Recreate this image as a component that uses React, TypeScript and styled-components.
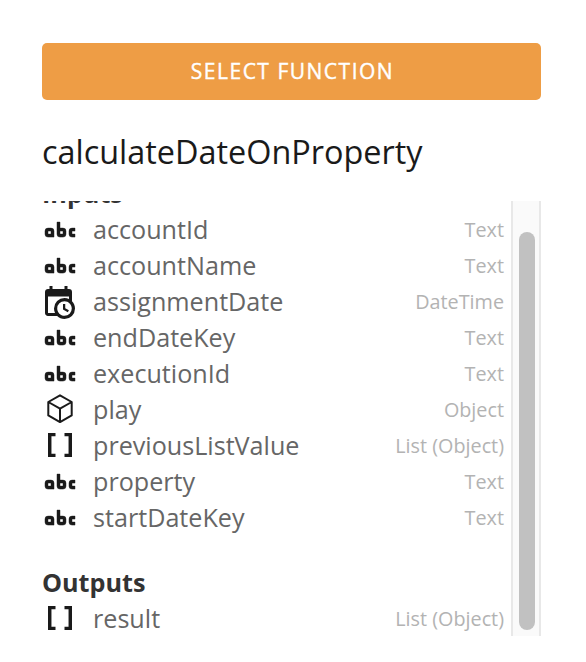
import React from "react";
import styled, { createGlobalStyle } from "styled-components";

const GlobalStyle = createGlobalStyle`
  * { box-sizing: border-box; }
  body { margin: 0; background: #fff; font-family: "Open Sans", sans-serif; }
`;

const Page = styled.main`
  width: 586px;
  height: 662px;
  padding: 43px 45px 0 42px;
  overflow: hidden;
`;

const SelectButton = styled.button`
  display: block;
  width: 100%;
  height: 57px;
  padding: 0 0 0 2px;
  border: 0;
  border-radius: 5px;
  background: #ee9d45;
  color: #fff;
  font: 500 21px/57px "Open Sans", sans-serif;
  letter-spacing: 1.5px;
  -webkit-text-stroke: 0.4px #fff;
`;

const Title = styled.h1`
  margin: 27px 0 0;
  height: 48px;
  font-size: 32.4px;
  line-height: 48px;
  font-weight: 400;
  color: #1a1a1a;
  white-space: nowrap;
`;

const Panel = styled.div`
  display: flex;
  margin-top: 26px;
  height: 435px;
`;

const Viewport = styled.div`
  flex: 1;
  display: flex;
  flex-direction: column;
  justify-content: flex-end;
  overflow: hidden;
  padding-right: 7px;
`;

const Group = styled.section`
  flex: none;
  & + & { margin-top: 29px; }
`;

const GroupTitle = styled.h2`
  margin: 0;
  height: 36px;
  font-size: 25.2px;
  line-height: 36px;
  font-weight: 700;
  color: #333;
`;

const Row = styled.div`
  display: flex;
  align-items: center;
  height: 36px;
`;

const Icon = styled.svg`
  width: 36px;
  height: 36px;
  flex: none;
  fill: #1a1a1a;
  overflow: visible;
`;

const Name = styled.span`
  flex: 1;
  margin-left: 15px;
  font-size: 25.15px;
  line-height: 36px;
  color: #666;
`;

const Type = styled.span`
  padding-top: 2px;
  font-size: 19.8px;
  line-height: 36px;
  color: #b3b3b3;
`;

const Track = styled.div`
  flex: none;
  width: 30px;
  padding: 31px 0 6px 6px;
  border: solid #e8e8e8;
  border-width: 0 2px;
  background: #fafafa;
`;

const Thumb = styled.div`
  width: 16px;
  height: 100%;
  border-radius: 8px;
  background: #c1c1c1;
`;

type Kind = "Text" | "DateTime" | "Object" | "List (Object)";

function KindIcon({ kind }: { kind: Kind }) {
  switch (kind) {
    case "Text":
      return (
        <Icon viewBox="0 -0.4 24 24">
          <path
            stroke="#1a1a1a"
            strokeWidth="0.3"
            strokeLinejoin="round"
            d="M6,11A2,2 0 0,1 8,13V17H4A2,2 0 0,1 2,15V13A2,2 0 0,1 4,11H6M4,13V15H6V13H4M20,13V15H22V17H20A2,2 0 0,1 18,15V13A2,2 0 0,1 20,11H22V13H20M12,7V11H14A2,2 0 0,1 16,13V15A2,2 0 0,1 14,17H12A2,2 0 0,1 10,15V7H12M12,15H14V13H12V15Z"
          />
        </Icon>
      );
    case "DateTime":
      return (
        <Icon viewBox="1 -1 24 24">
          <path d="M15,13H16.5V15.82L18.94,17.23L18.19,18.53L15,16.69V13M19,8H5V19H9.67C9.24,18.09 9,17.07 9,16A7,7 0 0,1 16,9C17.07,9 18.09,9.24 19,9.67V8M5,21C3.89,21 3,20.1 3,19V5C3,3.89 3.89,3 5,3H6V1H8V3H16V1H18V3H19A2,2 0 0,1 21,5V11.1C22.24,12.36 23,14.09 23,16A7,7 0 0,1 16,23C14.09,23 12.36,22.24 11.1,21H5M16,11.15A4.85,4.85 0 0,0 11.15,16C11.15,18.68 13.32,20.85 16,20.85A4.85,4.85 0 0,0 20.85,16C20.85,13.32 18.68,11.15 16,11.15Z" />
        </Icon>
      );
    case "Object":
      return (
        <Icon viewBox="0 0 36 36">
          <path
            d="M18,4.3L29.7,11V24.4L18,31.1L6.3,24.4V11ZM6.3,11L18,17.7L29.7,11M18,17.7V31.1"
            fill="none"
            stroke="#1a1a1a"
            strokeWidth="2"
            strokeLinejoin="round"
          />
        </Icon>
      );
    case "List (Object)":
      return (
        <Icon viewBox="0 0 24 24">
          <path d="M15,4V6.1H17.7V17.9H15V20H20V4M4,4V20H9V17.9H6.3V6.1H9V4H4Z" />
        </Icon>
      );
  }
}

const inputs: [string, Kind][] = [
  ["accountId", "Text"],
  ["accountName", "Text"],
  ["assignmentDate", "DateTime"],
  ["endDateKey", "Text"],
  ["executionId", "Text"],
  ["play", "Object"],
  ["previousListValue", "List (Object)"],
  ["property", "Text"],
  ["startDateKey", "Text"],
];

const outputs: [string, Kind][] = [["result", "List (Object)"]];

function ParameterGroup({ title, items }: { title: string; items: [string, Kind][] }) {
  return (
    <Group>
      <GroupTitle>{title}</GroupTitle>
      {items.map(([name, kind]) => (
        <Row key={name}>
          <KindIcon kind={kind} />
          <Name>{name}</Name>
          <Type>{kind}</Type>
        </Row>
      ))}
    </Group>
  );
}

export default function App() {
  return (
    <Page>
      <GlobalStyle />
      <SelectButton>SELECT FUNCTION</SelectButton>
      <Title>calculateDateOnProperty</Title>
      <Panel>
        <Viewport>
          <ParameterGroup title="Inputs" items={inputs} />
          <ParameterGroup title="Outputs" items={outputs} />
        </Viewport>
        <Track>
          <Thumb />
        </Track>
      </Panel>
    </Page>
  );
}
